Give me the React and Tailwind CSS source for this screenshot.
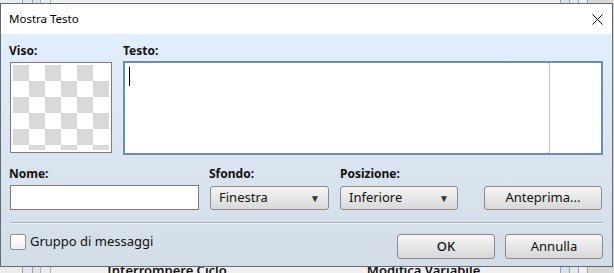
import React from 'react';

const font = { fontFamily: '"Noto Sans", "Open Sans", sans-serif' };

function Select({ value, width }) {
  return (
    <div
      className={`flex items-center justify-between h-[24px] ${width} pl-[8px] pr-[8px] border border-[#8b8b8b] rounded-[3px] bg-gradient-to-b from-[#f5f5f5] to-[#d9d9d9] text-[13px] text-[#111]`}
    >
      <span>{value}</span>
      <span className="text-[10px] text-[#333]">▼</span>
    </div>
  );
}

function Button({ children, width, className = '' }) {
  return (
    <div
      className={`flex items-center justify-center ${width} border border-[#8b8b8b] rounded-[3px] bg-gradient-to-b from-[#f6f6f6] to-[#d8d8d8] text-[13px] text-[#111] ${className}`}
    >
      {children}
    </div>
  );
}

function Checker() {
  const cells = [];
  for (let r = 0; r < 6; r++) {
    for (let c = 0; c < 6; c++) {
      cells.push(
        <div key={`${r}-${c}`} className={(r + c) % 2 === 0 ? 'bg-[#d9d9d9]' : 'bg-white'} />
      );
    }
  }
  return (
    <div className="ml-px mt-[3px] w-[102px] h-[91px] border border-[#7b7b7b] bg-white p-[2px]">
      <div className="w-[96px] h-[85px] overflow-hidden">
        <div className="grid grid-cols-[repeat(6,16px)] grid-rows-[repeat(6,16px)]">{cells}</div>
      </div>
    </div>
  );
}

export default function App() {
  return (
    <div className="relative w-[614px] h-[273px] overflow-hidden bg-[#e9e9e9]" style={font}>
      {/* window behind the dialog */}
      <div className="flex h-full">
        <div className="w-[23px] bg-[#ececec] border-r border-[#9c9c9c]" />
        <div className="w-[10px] bg-[#e3e6ea] border-r border-[#a3a3a3]" />
        <div className="w-[8px] bg-[#dfe3e8] border-r border-[#a8b0ba]" />
        <div className="w-[10px] bg-[#e9ecef] border-r border-[#b3b3b3]" />
        <div className="flex-1 flex flex-col justify-end bg-[#f0f0f0]">
          <div className="flex leading-[16px] mb-[-5px] text-[13px] font-semibold text-[#111]">
            <span className="ml-[56px]">Interrompere Ciclo</span>
            <span className="ml-[140px]">Modifica Variabile</span>
          </div>
        </div>
        <div className="w-[10px] bg-[#dde2e8] border-l border-r border-[#9ca6b2]" />
        <div className="w-[9px] bg-[#e4e7ea] border-r border-[#9ca6b2]" />
        <div className="w-[9px] bg-[#eceef0] border-r border-[#a6a6a6]" />
        <div className="w-[26px] bg-[#d8d8d8]" />
      </div>

      {/* dialog */}
      <div className="absolute left-0 top-[3px] w-[613px] h-[264px] border border-[#5f6b78] flex flex-col">
        <div className="flex items-center justify-between h-[30px] bg-white pl-[8px] pr-[9px]">
          <span className="text-[11.5px] text-black">Mostra Testo</span>
          <svg width="11" height="11" viewBox="0 0 11 11" className="mt-[1px]">
            <path d="M0.5 0.5 L10.5 10.5 M10.5 0.5 L0.5 10.5" stroke="#111" strokeWidth="1" />
          </svg>
        </div>

        <div className="flex-1 flex flex-col pt-[9px] pl-[8px] pr-[9px] bg-gradient-to-b from-[#e2eefb] to-[#d3dde8] text-[#111]">
          {/* preview + text */}
          <div className="flex">
            <div className="w-[103px]">
              <div className="h-[16px] leading-[16px] text-[12px] font-bold">Viso:</div>
              <Checker />
            </div>
            <div className="ml-[11px]">
              <div className="h-[16px] leading-[16px] text-[12px] font-bold">Testo:</div>
              <div className="mt-[2px] w-[480px] h-[94px] border-2 border-[#6b8db6] bg-white flex">
                <div className="flex-1 pl-[4px] pt-[4px]">
                  <div className="w-px h-[19px] bg-black" />
                </div>
                <div className="w-[52px] border-l border-[#c4c4c4]" />
              </div>
            </div>
          </div>

          {/* name / background / position */}
          <div className="flex mt-[11px]">
            <div className="w-[200px]">
              <div className="h-[16px] leading-[16px] text-[12px] font-bold">Nome:</div>
              <div className="ml-px mt-[3px] w-[189px] h-[25px] border border-[#7b7b7b] bg-white" />
            </div>
            <div className="w-[131px]">
              <div className="h-[16px] leading-[16px] text-[12px] font-bold">Sfondo:</div>
              <div className="ml-px mt-[4px]">
                <Select value="Finestra" width="w-[119px]" />
              </div>
            </div>
            <div className="w-[144px]">
              <div className="h-[16px] leading-[16px] text-[12px] font-bold">Posizione:</div>
              <div className="mt-[4px]">
                <Select value="Inferiore" width="w-[118px]" />
              </div>
            </div>
            <div className="pt-[20px]">
              <Button width="w-[118px]" className="h-[24px]">Anteprima...</Button>
            </div>
          </div>

          {/* separator */}
          <div className="ml-px mt-[12px] w-[593px] h-px bg-[#a6afb9]" />
          <div className="ml-px w-[593px] h-px bg-[#eef3f8]" />

          {/* footer */}
          <div className="flex items-start mt-[10px]">
            <div className="flex items-center h-[16px] ml-px">
              <div className="w-[16px] h-[16px] rounded-[2px] border border-[#8e8e8e] bg-gradient-to-b from-white to-[#f1f1f1]" />
              <span className="ml-[4px] text-[13px]">Gruppo di messaggi</span>
            </div>
            <div className="ml-auto flex gap-[10px]">
              <Button width="w-[98px]" className="h-[25px] font-medium">OK</Button>
              <Button width="w-[98px]" className="h-[25px]">Annulla</Button>
            </div>
          </div>
        </div>
      </div>
    </div>
  );
}
